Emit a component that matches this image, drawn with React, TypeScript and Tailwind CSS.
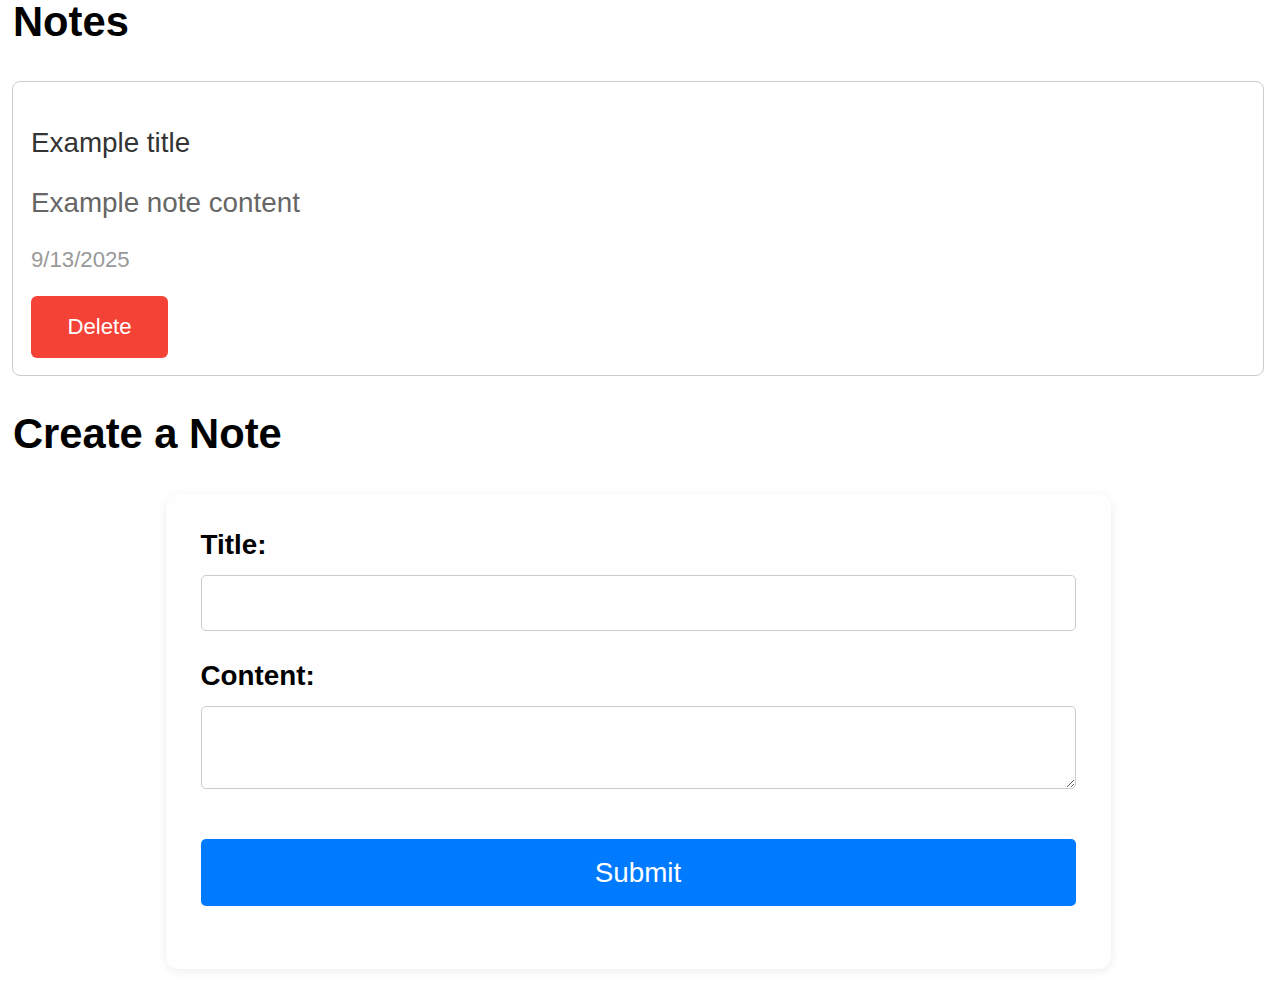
import React from "react";

export default function App() {
  return (
    <div className="min-h-[987px] bg-white pl-[12px] pr-[14px] pb-[18px] font-['Liberation_Sans',Arial,sans-serif] text-black">
      <h1 className="h-[42px] pt-[1px] text-[41.7px] font-bold leading-[41.7px] pl-[1px]">Notes</h1>

      <div className="mt-[39px] rounded-[8px] border border-[#cccccc] px-[18px] pt-[45px] pb-[17px]">
        <div className="text-[27.8px] leading-[32px] text-[#333333]">Example title</div>
        <div className="mt-[28px] text-[27.8px] leading-[32px] text-[#666666]">Example note content</div>
        <div className="mt-[28px] text-[22.2px] leading-[26px] text-[#999999]">9/13/2025</div>
        <button className="mt-[23px] flex h-[62px] w-[137px] items-center justify-center rounded-[6px] bg-[#f44336] text-[22.2px] leading-[26px] text-white">
          Delete
        </button>
      </div>

      <h2 className="mt-[37px] h-[42px] text-[41.7px] font-bold leading-[41.7px] pl-[1px]">Create a Note</h2>

      <div className="mx-auto mt-[39px] w-[945px] rounded-[12px] bg-[#fefefe] px-[35px] pt-[35px] pb-[63px] shadow-[0_2px_10px_rgba(0,0,0,0.08)]">
        <label className="block text-[27.8px] font-bold leading-[32px]">Title:</label>
        <input
          type="text"
          className="mt-[14px] block h-[56px] w-full rounded-[5px] border border-[#cccccc] bg-white px-[14px] text-[22px] outline-none"
        />
        <label className="mt-[29px] block text-[27.8px] font-bold leading-[32px]">Content:</label>
        <textarea className="mt-[14px] block h-[83px] w-full rounded-[5px] border border-[#cccccc] bg-white px-[14px] py-[10px] text-[22px] outline-none" />
        <button className="mt-[50px] flex h-[67px] w-full items-center justify-center rounded-[5px] bg-[#007bff] text-[27.8px] leading-[32px] text-white">
          Submit
        </button>
      </div>
    </div>
  );
}
